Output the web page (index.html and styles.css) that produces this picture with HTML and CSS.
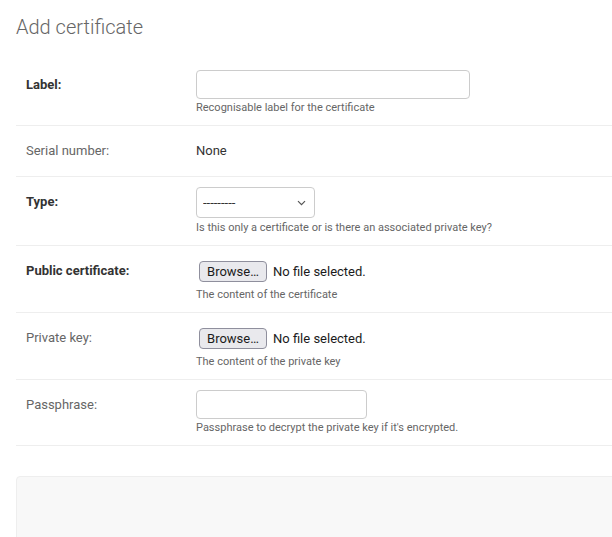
FILE: index.html
```html
<!DOCTYPE html>
<html lang="en">
<head>
<meta charset="utf-8">
<title>Add certificate</title>
<link rel="stylesheet" href="styles.css">
</head>
<body>
<div class="content">
  <h1 class="title">Add certificate</h1>
  <form class="form">
    <fieldset class="fieldset">
      <div class="row">
        <label class="label required" for="id_label">Label:</label>
        <div class="field">
          <input class="text-input wide" type="text" id="id_label">
          <div class="help">Recognisable label for the certificate</div>
        </div>
      </div>
      <div class="row">
        <span class="label">Serial number:</span>
        <div class="field">
          <div class="readonly">None</div>
        </div>
      </div>
      <div class="row">
        <label class="label required" for="id_type">Type:</label>
        <div class="field">
          <div class="select-wrap">
            <select class="select" id="id_type"><option>---------</option></select>
            <svg class="chevron" width="9" height="6" viewBox="0 0 9 6"><path d="M1 1.2l3.5 3.5 3.5-3.5" fill="none" stroke="#555" stroke-width="1.2"/></svg>
          </div>
          <div class="help">Is this only a certificate or is there an associated private key?</div>
        </div>
      </div>
      <div class="row">
        <span class="label required">Public certificate:</span>
        <div class="field">
          <div class="file">
            <button type="button" class="file-btn">Browse…</button>
            <span class="file-name">No file selected.</span>
          </div>
          <div class="help">The content of the certificate</div>
        </div>
      </div>
      <div class="row">
        <span class="label">Private key:</span>
        <div class="field">
          <div class="file">
            <button type="button" class="file-btn">Browse…</button>
            <span class="file-name">No file selected.</span>
          </div>
          <div class="help">The content of the private key</div>
        </div>
      </div>
      <div class="row">
        <label class="label" for="id_pass">Passphrase:</label>
        <div class="field">
          <input class="text-input short" type="password" id="id_pass">
          <div class="help">Passphrase to decrypt the private key if it's encrypted.</div>
        </div>
      </div>
    </fieldset>
    <div class="submit-row"></div>
  </form>
</div>
</body>
</html>
```

FILE: styles.css
```css
html, body {
  margin: 0;
  padding: 0;
  background: #fff;
  overflow: hidden;
}
body {
  font-family: Roboto, "Liberation Sans", sans-serif;
  color: #333;
}
.content {
  padding: 15px 0 0 16px;
  width: 700px;
}
.title {
  margin: 0 0 21px;
  font-size: 20px;
  line-height: 24px;
  font-weight: 300;
  color: #666;
}
.fieldset {
  margin: 0;
  padding: 0;
  border: none;
}
.row {
  display: flex;
  padding: 10px;
  border-bottom: 1px solid #eee;
}
.label {
  width: 170px;
  flex: none;
  font-size: 13px;
  line-height: 30px;
  color: #666;
}
.label.required {
  font-weight: 700;
  color: #333;
}
.field {
  display: flex;
  flex-direction: column;
  align-items: flex-start;
}
.text-input {
  box-sizing: border-box;
  height: 29px;
  border: 1px solid #ccc;
  border-radius: 4px;
  padding: 5px 6px;
  font: 13px Roboto, sans-serif;
  margin: 0;
}
.text-input.wide { width: 274px; }
.text-input.short { width: 171px; }
.help {
  margin-top: 2px;
  font-size: 11px;
  line-height: 14px;
  color: #666;
}
.readonly {
  font-size: 13px;
  line-height: 30px;
  color: #333;
}
.select-wrap {
  position: relative;
  margin-bottom: 1px;
}
.select {
  appearance: none;
  -webkit-appearance: none;
  box-sizing: border-box;
  width: 119px;
  height: 31px;
  margin: 0;
  padding: 0 6px;
  border: 1px solid #ccc;
  border-radius: 4px;
  background: #fff;
  font: 13px Roboto, sans-serif;
  color: #333;
}
.chevron {
  position: absolute;
  right: 9px;
  top: 13px;
  pointer-events: none;
}
.file {
  display: flex;
  align-items: center;
  height: 30px;
  padding-left: 3px;
  gap: 6px;
}
.file-btn {
  box-sizing: border-box;
  height: 21px;
  width: 68px;
  padding: 0;
  margin: 0;
  background: #e9e9ed;
  border: 1px solid #8f8f9d;
  border-radius: 4px;
  font: 13px Roboto, sans-serif;
  color: #1b1b1b;
}
.file-name {
  font-size: 13px;
  color: #1b1b1b;
}
.submit-row {
  margin-top: 30px;
  height: 120px;
  background: #f8f8f8;
  border: 1px solid #eee;
  border-radius: 4px;
}
```
